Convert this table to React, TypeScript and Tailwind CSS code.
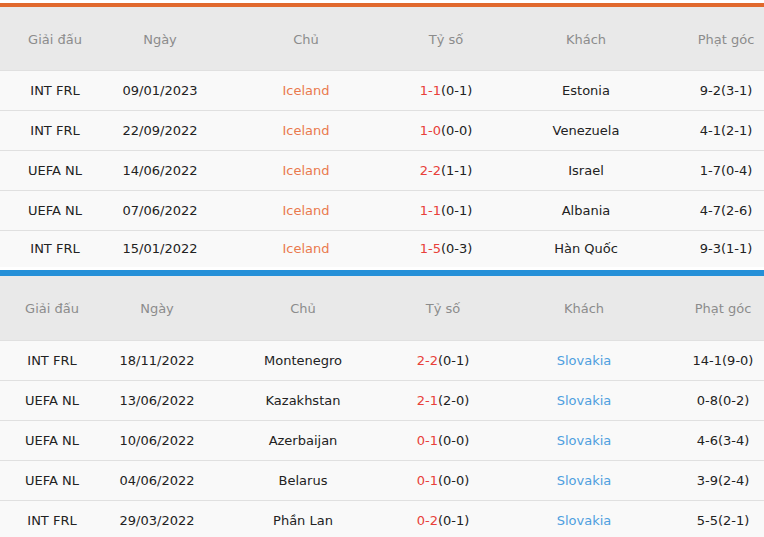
import React from "react";

type Row = {
    league: string;
    date: string;
    home: string;
    score: string;
    half: string;
    away: string;
    corner: string;
};

const topRows: Row[] = [
    { league: "INT FRL", date: "09/01/2023", home: "Iceland", score: "1-1", half: "(0-1)", away: "Estonia", corner: "9-2(3-1)" },
    { league: "INT FRL", date: "22/09/2022", home: "Iceland", score: "1-0", half: "(0-0)", away: "Venezuela", corner: "4-1(2-1)" },
    { league: "UEFA NL", date: "14/06/2022", home: "Iceland", score: "2-2", half: "(1-1)", away: "Israel", corner: "1-7(0-4)" },
    { league: "UEFA NL", date: "07/06/2022", home: "Iceland", score: "1-1", half: "(0-1)", away: "Albania", corner: "4-7(2-6)" },
    { league: "INT FRL", date: "15/01/2022", home: "Iceland", score: "1-5", half: "(0-3)", away: "Hàn Quốc", corner: "9-3(1-1)" },
];

const bottomRows: Row[] = [
    { league: "INT FRL", date: "18/11/2022", home: "Montenegro", score: "2-2", half: "(0-1)", away: "Slovakia", corner: "14-1(9-0)" },
    { league: "UEFA NL", date: "13/06/2022", home: "Kazakhstan", score: "2-1", half: "(2-0)", away: "Slovakia", corner: "0-8(0-2)" },
    { league: "UEFA NL", date: "10/06/2022", home: "Azerbaijan", score: "0-1", half: "(0-0)", away: "Slovakia", corner: "4-6(3-4)" },
    { league: "UEFA NL", date: "04/06/2022", home: "Belarus", score: "0-1", half: "(0-0)", away: "Slovakia", corner: "3-9(2-4)" },
    { league: "INT FRL", date: "29/03/2022", home: "Phần Lan", score: "0-2", half: "(0-1)", away: "Slovakia", corner: "5-5(2-1)" },
];

const headers = ["Giải đấu", "Ngày", "Chủ", "Tỷ số", "Khách", "Phạt góc"];

const MatchTable: React.FC<{ rows: Row[]; team: "home" | "away"; cols: string; headH: string; lastH: string }> = ({ rows, team, cols, headH, lastH }) => {
    return (
        <div className="w-[770px]">
            <div className={`grid ${cols} ${headH} items-center pt-[2px] bg-[#e9e9e9] text-[#8c8c8c]`}>
                {headers.map((h) => (
                    <div key={h} className="text-center">{h}</div>
                ))}
            </div>
            {rows.map((r, i) => (
                <div
                    key={i}
                    className={`grid ${cols} ${i === rows.length - 1 ? lastH : "h-[40px]"} items-center bg-[#f9f9f9] text-[#222] border-t border-[#e0e0e0]`}
                >
                    <div className="text-center">{r.league}</div>
                    <div className="text-center">{r.date}</div>
                    <div className={`text-center ${team === "home" ? "text-[#ea7a4e]" : ""}`}>{r.home}</div>
                    <div className="text-center">
                        <span className="text-[#e8403a]">{r.score}</span>
                        {r.half}
                    </div>
                    <div className={`text-center ${team === "away" ? "text-[#4f9fdf]" : ""}`}>{r.away}</div>
                    <div className="text-center">{r.corner}</div>
                </div>
            ))}
        </div>
    );
};

export default function App() {
    return (
        <div className="w-[764px] h-[537px] overflow-hidden bg-white text-[13px] font-['DejaVu_Sans',sans-serif]">
            <div className="h-[3px] bg-white" />
            <div className="h-[4px] bg-[#e1692d]" />
            <MatchTable rows={topRows} team="home" cols="grid-cols-[110px_100px_192px_88px_192px_88px]" headH="h-[63px]" lastH="h-[37px]" />
            <div className="h-[3px] bg-white" />
            <div className="h-[6px] bg-[#2590d8]" />
            <MatchTable rows={bottomRows} team="away" cols="grid-cols-[104px_106px_186px_94px_188px_90px]" headH="h-[64px]" lastH="h-[40px]" />
        </div>
    );
}
